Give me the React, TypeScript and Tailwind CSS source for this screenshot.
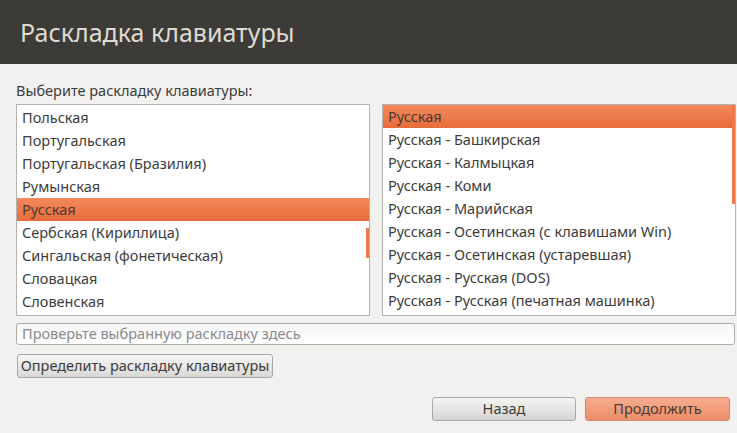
const leftItems = [
  'Польская',
  'Португальская',
  'Португальская (Бразилия)',
  'Румынская',
  'Русская',
  'Сербская (Кириллица)',
  'Сингальская (фонетическая)',
  'Словацкая',
  'Словенская',
];

const rightItems = [
  'Русская',
  'Русская - Башкирская',
  'Русская - Калмыцкая',
  'Русская - Коми',
  'Русская - Марийская',
  'Русская - Осетинская (с клавишами Win)',
  'Русская - Осетинская (устаревшая)',
  'Русская - Русская (DOS)',
  'Русская - Русская (печатная машинка)',
];

function LayoutList({ items, selected, offset, thumb }: { items: string[]; selected: number; offset: string; thumb: string }) {
  return (
    <div className="relative h-[212px] overflow-hidden border border-[#b5b3ae] bg-white">
      <div className={offset}>
        {items.map((item, i) => (
          <div
            key={item}
            className={
              i === selected
                ? 'flex h-[23px] items-center whitespace-nowrap bg-gradient-to-b from-[#f3885b] to-[#e86c3a] pl-[5px] text-[#4a3a33]'
                : 'flex h-[23px] items-center whitespace-nowrap pl-[5px] text-[#3c3c3c]'
            }
          >
            {item}
          </div>
        ))}
      </div>
      {/* scrollbar thumb */}
      <div className={`absolute right-0 w-[3px] bg-[#f07746] ${thumb}`} />
    </div>
  );
}

export default function App() {
  return (
    <div
      className="h-[433px] w-[737px] overflow-hidden bg-[#f2f1f0] text-[14.5px] text-[#3c3c3c]"
      style={{ fontFamily: '"Noto Sans", "Open Sans", sans-serif' }}
    >
      <div className="flex h-[64px] items-center bg-[#3c3b37] pl-[20px]">
        <h1 className="text-[25px] leading-none text-[#dfdbd2]">Раскладка клавиатуры</h1>
      </div>

      <div className="pl-[16px] pr-[2px]">
        <div className="mt-[18px] h-[16px] leading-[16px]">Выберите раскладку клавиатуры:</div>
        <div className="mt-[6px] grid grid-cols-[354px_354px] gap-[12px]">
          <LayoutList items={leftItems} selected={4} offset="pt-[1px]" thumb="top-[123px] h-[30px]" />
          <LayoutList items={rightItems} selected={0} offset="pt-0" thumb="top-0 h-[99px]" />
        </div>

        <div className="mt-[7px] flex h-[22px] items-center rounded-[3px] border border-[#b0aea9] bg-gradient-to-b from-[#f6f6f6] to-white pl-[5px] text-[#8a8a8a]">
          Проверьте выбранную раскладку здесь
        </div>

        <button className="ml-[1px] mt-[9px] h-[24px] w-[256px] whitespace-nowrap rounded-[3px] border border-[#a9a7a3] bg-gradient-to-b from-[#f7f7f6] to-[#d9d8d6] text-[#3c3c3c]">
          Определить раскладку клавиатуры
        </button>

        <div className="mt-[19px] flex justify-end gap-[9px] pr-[5px]">
          <button className="h-[24px] w-[144px] rounded-[3px] border border-[#a9a7a3] bg-gradient-to-b from-[#f4f4f3] to-[#d6d5d3] text-[#3c3c3c]">
            Назад
          </button>
          <button className="h-[24px] w-[145px] rounded-[3px] border border-[#cf8a70] bg-gradient-to-b from-[#f6ad90] to-[#ec8c68] text-[#4a3a33]">
            Продолжить
          </button>
        </div>
      </div>
    </div>
  );
}
